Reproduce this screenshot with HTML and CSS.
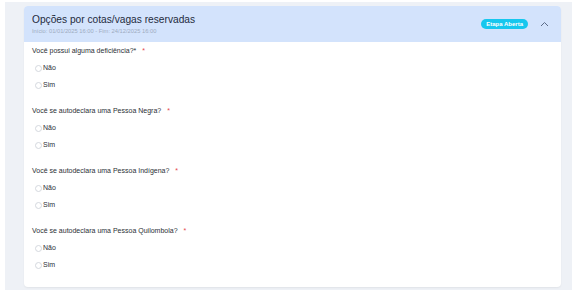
FILE: index.html
```html
<!DOCTYPE html>
<html lang="pt-BR">
<head>
    <meta charset="UTF-8">
    <title>Opções por cotas/vagas reservadas</title>
    <link rel="stylesheet" href="styles.css">
</head>
<body>
    <div class="page">
        <div class="card">
            <!-- Cabeçalho da etapa -->
            <div class="card-header">
                <div class="header-text">
                    <h2>Opções por cotas/vagas reservadas</h2>
                    <span class="dates">Início: 01/01/2025 16:00 - Fim: 24/12/2025 16:00</span>
                </div>
                <span class="badge">Etapa Aberta</span>
                <svg class="chevron" width="9" height="6" viewBox="0 0 9 6">
                    <path d="M1 5 L4.5 1.5 L8 5" fill="none" stroke="#5b6b86" stroke-width="1"/>
                </svg>
            </div>

            <div class="card-body">
                <div class="question">
                    <label>Você possui alguma deficiência?* <span class="req">*</span></label>
                    <div class="option"><span class="radio"></span>Não</div>
                    <div class="option"><span class="radio"></span>Sim</div>
                </div>
                <div class="question">
                    <label>Você se autodeclara uma Pessoa Negra? <span class="req">*</span></label>
                    <div class="option"><span class="radio"></span>Não</div>
                    <div class="option"><span class="radio"></span>Sim</div>
                </div>
                <div class="question">
                    <label>Você se autodeclara uma Pessoa Indígena? <span class="req">*</span></label>
                    <div class="option"><span class="radio"></span>Não</div>
                    <div class="option"><span class="radio"></span>Sim</div>
                </div>
                <div class="question">
                    <label>Você se autodeclara uma Pessoa Quilombola? <span class="req">*</span></label>
                    <div class="option"><span class="radio"></span>Não</div>
                    <div class="option"><span class="radio"></span>Sim</div>
                </div>
            </div>
        </div>
    </div>
</body>
</html>
```

FILE: styles.css
```css
body {
    margin: 0;
    font-family: 'Liberation Sans', Arial, sans-serif;
    background: #ffffff;
}

.page {
    margin: 2px 8px 0 5px;
    padding: 4px 11px 4px 19px;
    background-color: #eef1f6;
}

.card {
    background: white;
    border-radius: 4px;
    overflow: hidden;
    box-shadow: 0 1px 2px rgba(0, 0, 0, 0.06);
}

/* Cabeçalho */
.card-header {
    display: flex;
    align-items: center;
    height: 36px;
    padding: 0 12px 0 8px;
    background-color: #d3e3fc;
}

.header-text {
    flex: 1;
    display: flex;
    flex-direction: column;
}

.header-text h2 {
    margin: 0;
    font-size: 10.2px;
    font-weight: normal;
    line-height: 13px;
    color: #1f2b3d;
}

.dates {
    margin-top: 2px;
    font-size: 5.75px;
    line-height: 7px;
    color: #9eabbf;
}

.badge {
    background-color: #16c7ee;
    color: white;
    font-size: 6px;
    font-weight: bold;
    line-height: 10px;
    padding: 0 5px;
    border-radius: 6px;
    margin-right: 12px;
}

.chevron {
    display: block;
}

/* Perguntas */
.card-body {
    padding: 4px 8px 1px 8px;
}

.question {
    margin-bottom: 16px;
}

.question label {
    display: block;
    font-size: 7px;
    line-height: 10px;
    color: #2b2f36;
    margin-bottom: 7px;
}

.req {
    color: #e5484d;
    margin-left: 4px;
}

.option {
    display: flex;
    align-items: center;
    font-size: 7px;
    line-height: 10px;
    color: #2b2f36;
    margin-bottom: 7px;
    padding-left: 3px;
}

.option:last-child {
    margin-bottom: 0;
}

.radio {
    width: 5px;
    height: 5px;
    border: 0.6px solid #d4d8de;
    border-radius: 50%;
    margin-right: 1px;
}
```
